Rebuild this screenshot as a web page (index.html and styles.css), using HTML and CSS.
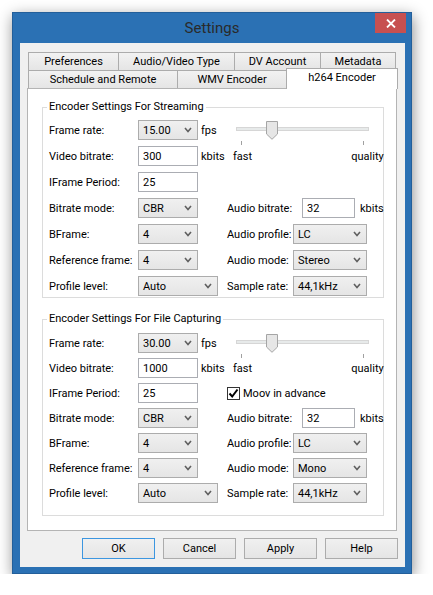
FILE: index.html
```html
<!DOCTYPE html>
<html lang="en">
  <head>
    <meta charset="UTF-8" />
    <title>Settings</title>
    <link rel="stylesheet" href="styles.css">
  </head>
  <body>
    <div class="window">
      <div class="titlebar">
        <span class="title">Settings</span>
        <button class="close-btn" title="Close">
          <svg width="10" height="9" viewBox="0 0 10 9">
            <path d="M1 0.5 L9 8.5 M9 0.5 L1 8.5" stroke="#fff" stroke-width="1.8" fill="none" />
          </svg>
        </button>
      </div>

      <div class="client">
        <!-- Tabs -->
        <div class="tab-row">
          <div class="tab t-pref">Preferences</div>
          <div class="tab t-av">Audio/Video Type</div>
          <div class="tab t-dv">DV Account</div>
          <div class="tab t-meta">Metadata</div>
        </div>
        <div class="tab-row">
          <div class="tab t-sched">Schedule and Remote</div>
          <div class="tab t-wmv">WMV Encoder</div>
          <div class="tab t-h264 active">h264 Encoder</div>
        </div>

        <div class="panel">
          <!-- Streaming -->
          <fieldset class="group">
            <legend>Encoder Settings For Streaming</legend>
            <div class="grid">
              <div class="field left">
                <span class="lbl">Frame rate:</span>
                <div class="combo"><span>15.00</span><svg class="chev" width="8" height="6" viewBox="0 0 8 6"><path d="M1 1 L4 4.5 L7 1" /></svg></div>
                <span class="unit">fps</span>
              </div>
              <div class="slider right">
                <div class="track-area">
                  <div class="track"></div>
                  <div class="ticks"><i></i><i></i></div>
                  <svg class="thumb" width="12" height="19" viewBox="0 0 12 19"><path d="M0.5 0.5 H11.5 V13 L6 18.3 L0.5 13 Z" /></svg>
                </div>
                <div class="scale"><span>fast</span><span>quality</span></div>
              </div>
              <div class="field left">
                <span class="lbl">Video bitrate:</span>
                <input class="text" type="text" value="300">
                <span class="unit">kbits</span>
              </div>
              <div class="field left">
                <span class="lbl">IFrame Period:</span>
                <input class="text" type="text" value="25">
              </div>
              <div class="field left">
                <span class="lbl">Bitrate mode:</span>
                <div class="combo"><span>CBR</span><svg class="chev" width="8" height="6" viewBox="0 0 8 6"><path d="M1 1 L4 4.5 L7 1" /></svg></div>
              </div>
              <div class="field right">
                <span class="lbl-ab">Audio bitrate:</span>
                <input class="text text-ab" type="text" value="32">
                <span class="unit-ab">kbits</span>
              </div>
              <div class="field left">
                <span class="lbl">BFrame:</span>
                <div class="combo"><span>4</span><svg class="chev" width="8" height="6" viewBox="0 0 8 6"><path d="M1 1 L4 4.5 L7 1" /></svg></div>
              </div>
              <div class="field right">
                <span class="lbl-r">Audio profile:</span>
                <div class="combo combo-r"><span>LC</span><svg class="chev" width="8" height="6" viewBox="0 0 8 6"><path d="M1 1 L4 4.5 L7 1" /></svg></div>
              </div>
              <div class="field left">
                <span class="lbl">Reference frame:</span>
                <div class="combo"><span>4</span><svg class="chev" width="8" height="6" viewBox="0 0 8 6"><path d="M1 1 L4 4.5 L7 1" /></svg></div>
              </div>
              <div class="field right">
                <span class="lbl-r">Audio mode:</span>
                <div class="combo combo-r"><span>Stereo</span><svg class="chev" width="8" height="6" viewBox="0 0 8 6"><path d="M1 1 L4 4.5 L7 1" /></svg></div>
              </div>
              <div class="field left">
                <span class="lbl">Profile level:</span>
                <div class="combo combo-wide"><span>Auto</span><svg class="chev" width="8" height="6" viewBox="0 0 8 6"><path d="M1 1 L4 4.5 L7 1" /></svg></div>
              </div>
              <div class="field right">
                <span class="lbl-r">Sample rate:</span>
                <div class="combo combo-r"><span>44,1kHz</span><svg class="chev" width="8" height="6" viewBox="0 0 8 6"><path d="M1 1 L4 4.5 L7 1" /></svg></div>
              </div>
            </div>
          </fieldset>

          <!-- File capturing -->
          <fieldset class="group group-file">
            <legend>Encoder Settings For File Capturing</legend>
            <div class="grid">
              <div class="field left">
                <span class="lbl">Frame rate:</span>
                <div class="combo"><span>30.00</span><svg class="chev" width="8" height="6" viewBox="0 0 8 6"><path d="M1 1 L4 4.5 L7 1" /></svg></div>
                <span class="unit">fps</span>
              </div>
              <div class="slider right">
                <div class="track-area">
                  <div class="track"></div>
                  <div class="ticks"><i></i><i></i></div>
                  <svg class="thumb" width="12" height="19" viewBox="0 0 12 19"><path d="M0.5 0.5 H11.5 V13 L6 18.3 L0.5 13 Z" /></svg>
                </div>
                <div class="scale"><span>fast</span><span>quality</span></div>
              </div>
              <div class="field left">
                <span class="lbl">Video bitrate:</span>
                <input class="text" type="text" value="1000">
                <span class="unit">kbits</span>
              </div>
              <div class="field left">
                <span class="lbl">IFrame Period:</span>
                <input class="text" type="text" value="25">
              </div>
              <div class="field right">
                <span class="check">
                  <svg width="11" height="11" viewBox="0 0 11 11"><path d="M1.5 5.5 L4.2 8.5 L9.5 1.5" /></svg>
                </span>
                <span class="check-lbl">Moov in advance</span>
              </div>
              <div class="field left">
                <span class="lbl">Bitrate mode:</span>
                <div class="combo"><span>CBR</span><svg class="chev" width="8" height="6" viewBox="0 0 8 6"><path d="M1 1 L4 4.5 L7 1" /></svg></div>
              </div>
              <div class="field right">
                <span class="lbl-ab">Audio bitrate:</span>
                <input class="text text-ab" type="text" value="32">
                <span class="unit-ab">kbits</span>
              </div>
              <div class="field left">
                <span class="lbl">BFrame:</span>
                <div class="combo"><span>4</span><svg class="chev" width="8" height="6" viewBox="0 0 8 6"><path d="M1 1 L4 4.5 L7 1" /></svg></div>
              </div>
              <div class="field right">
                <span class="lbl-r">Audio profile:</span>
                <div class="combo combo-r"><span>LC</span><svg class="chev" width="8" height="6" viewBox="0 0 8 6"><path d="M1 1 L4 4.5 L7 1" /></svg></div>
              </div>
              <div class="field left">
                <span class="lbl">Reference frame:</span>
                <div class="combo"><span>4</span><svg class="chev" width="8" height="6" viewBox="0 0 8 6"><path d="M1 1 L4 4.5 L7 1" /></svg></div>
              </div>
              <div class="field right">
                <span class="lbl-r">Audio mode:</span>
                <div class="combo combo-r"><span>Mono</span><svg class="chev" width="8" height="6" viewBox="0 0 8 6"><path d="M1 1 L4 4.5 L7 1" /></svg></div>
              </div>
              <div class="field left">
                <span class="lbl">Profile level:</span>
                <div class="combo combo-wide"><span>Auto</span><svg class="chev" width="8" height="6" viewBox="0 0 8 6"><path d="M1 1 L4 4.5 L7 1" /></svg></div>
              </div>
              <div class="field right">
                <span class="lbl-r">Sample rate:</span>
                <div class="combo combo-r"><span>44,1kHz</span><svg class="chev" width="8" height="6" viewBox="0 0 8 6"><path d="M1 1 L4 4.5 L7 1" /></svg></div>
              </div>
            </div>
          </fieldset>
        </div>

        <div class="buttons">
          <button class="btn btn-default">OK</button>
          <button class="btn">Cancel</button>
          <button class="btn">Apply</button>
          <button class="btn">Help</button>
        </div>
      </div>
    </div>
  </body>
</html>
```

FILE: styles.css
```css
body {
  margin: 0;
  background: #fff;
  font-family: Roboto, "Liberation Sans", Arial, sans-serif;
  font-size: 11px;
  color: #000;
}

.window {
  box-sizing: border-box;
  width: 400px;
  height: 562px;
  margin: 12px 0 0 12px;
  background: #2b71b4;
  border: 1px solid #235f9a;
  box-shadow: 1px 4px 14px rgba(0, 0, 0, 0.45);
  display: flex;
  flex-direction: column;
}

/* Title bar */
.titlebar {
  height: 30px;
  display: grid;
  grid-template-columns: 1fr auto 1fr;
  align-items: start;
}

.title {
  grid-column: 2;
  font-size: 15px;
  line-height: 30px;
  color: #2a2a2a;
}

.close-btn {
  grid-column: 3;
  justify-self: end;
  width: 31px;
  height: 20px;
  margin-right: 5px;
  padding: 0;
  border: none;
  background: #c75050;
  display: flex;
  align-items: center;
  justify-content: center;
}

.client {
  flex: 1;
  margin: 0 6px 6px 7px;
  background: #f0f0f0;
  padding: 9px 8px 8px 7px;
  display: flex;
  flex-direction: column;
}

/* Tabs */
.tab-row {
  display: flex;
  height: 18px;
  margin-left: 1px;
}

.tab {
  box-sizing: border-box;
  height: 18px;
  border: 1px solid #acacac;
  border-bottom: none;
  margin-right: -1px;
  background: linear-gradient(#f2f2f2, #e5e5e5);
  text-align: center;
  line-height: 17px;
  white-space: nowrap;
}

.tab.active {
  position: relative;
  z-index: 1;
  height: 21px;
  margin-top: -2px;
  background: #fff;
  line-height: 17px;
}

.t-pref { width: 91px; }
.t-av { width: 117px; }
.t-dv { width: 87px; }
.t-meta { width: 76px; }
.t-sched { width: 150px; }
.t-wmv { width: 110px; }
.t-h264 { width: 112px; }

.panel {
  flex: 1;
  background: #fff;
  border: 1px solid #b4b4b4;
  padding: 11px 12px 0 14px;
}

/* Group boxes */
.group {
  margin: 0;
  min-width: 0;
  border: 1px solid #dcdcdc;
  padding: 6px 6px 1px 6px;
}

.group legend {
  padding: 0 2px;
  margin-left: -2px;
  line-height: 14px;
}

.group-file {
  margin-top: 14px;
  padding-top: 7px;
  padding-bottom: 12px;
}

.grid {
  display: grid;
  grid-template-columns: 178px 1fr;
  grid-auto-rows: 20px;
  row-gap: 6px;
}

.group-file .grid {
  row-gap: 5px;
}

.left { grid-column: 1; }
.right { grid-column: 2; }

.field {
  display: flex;
  align-items: center;
  white-space: nowrap;
}

.lbl { width: 89px; }
.lbl-r { width: 66px; }
.lbl-ab { width: 75px; }

.unit { margin-left: 3px; }
.unit-ab { margin-left: 5px; }

.combo {
  box-sizing: border-box;
  width: 60px;
  height: 20px;
  border: 1px solid #acacac;
  background: linear-gradient(#f0f0f0, #e5e5e5);
  display: flex;
  align-items: center;
  justify-content: space-between;
  padding: 0 5px 0 4px;
}

.combo-wide { width: 80px; }
.combo-r { width: 74px; }

.chev path {
  fill: none;
  stroke: #606060;
  stroke-width: 1.6;
}

.text {
  box-sizing: border-box;
  width: 60px;
  height: 20px;
  margin: 0;
  border: 1px solid #abadb3;
  padding: 0 4px;
  font: inherit;
  color: #000;
  background: #fff;
}

.text-ab { width: 53px; }

/* Slider */
.slider {
  grid-row: span 2;
  display: flex;
  flex-direction: column;
}

.track-area {
  position: relative;
  box-sizing: border-box;
  height: 26px;
  padding: 7px 0 0 9px;
}

.track {
  box-sizing: border-box;
  width: 133px;
  height: 4px;
  border: 1px solid #d6d6d6;
  background: #e7eaea;
}

.ticks {
  display: flex;
  justify-content: space-between;
  width: 123px;
  margin: 10px 0 0 5px;
}

.ticks i {
  width: 1px;
  height: 4px;
  background: #a0a0a0;
}

.thumb {
  position: absolute;
  left: 39px;
  top: 1px;
}

.thumb path {
  fill: #e6e6e6;
  stroke: #a5a5a5;
}

.scale {
  height: 20px;
  display: flex;
  align-items: center;
  justify-content: space-between;
  padding-left: 6px;
}

/* Checkbox */
.check {
  box-sizing: border-box;
  width: 13px;
  height: 13px;
  border: 1px solid #333;
  background: #fff;
  display: flex;
  align-items: center;
  justify-content: center;
}

.check path {
  fill: none;
  stroke: #000;
  stroke-width: 2;
}

.check-lbl { margin-left: 3px; }

/* Buttons */
.buttons {
  display: flex;
  justify-content: flex-end;
  gap: 8px;
  margin: 7px -1px 0 0;
}

.btn {
  box-sizing: border-box;
  width: 73px;
  height: 21px;
  padding: 0;
  border: 1px solid #acacac;
  background: linear-gradient(#f0f0f0, #e5e5e5);
  font: inherit;
  color: #000;
}

.btn-default {
  border-color: #3c96e0;
}
```
